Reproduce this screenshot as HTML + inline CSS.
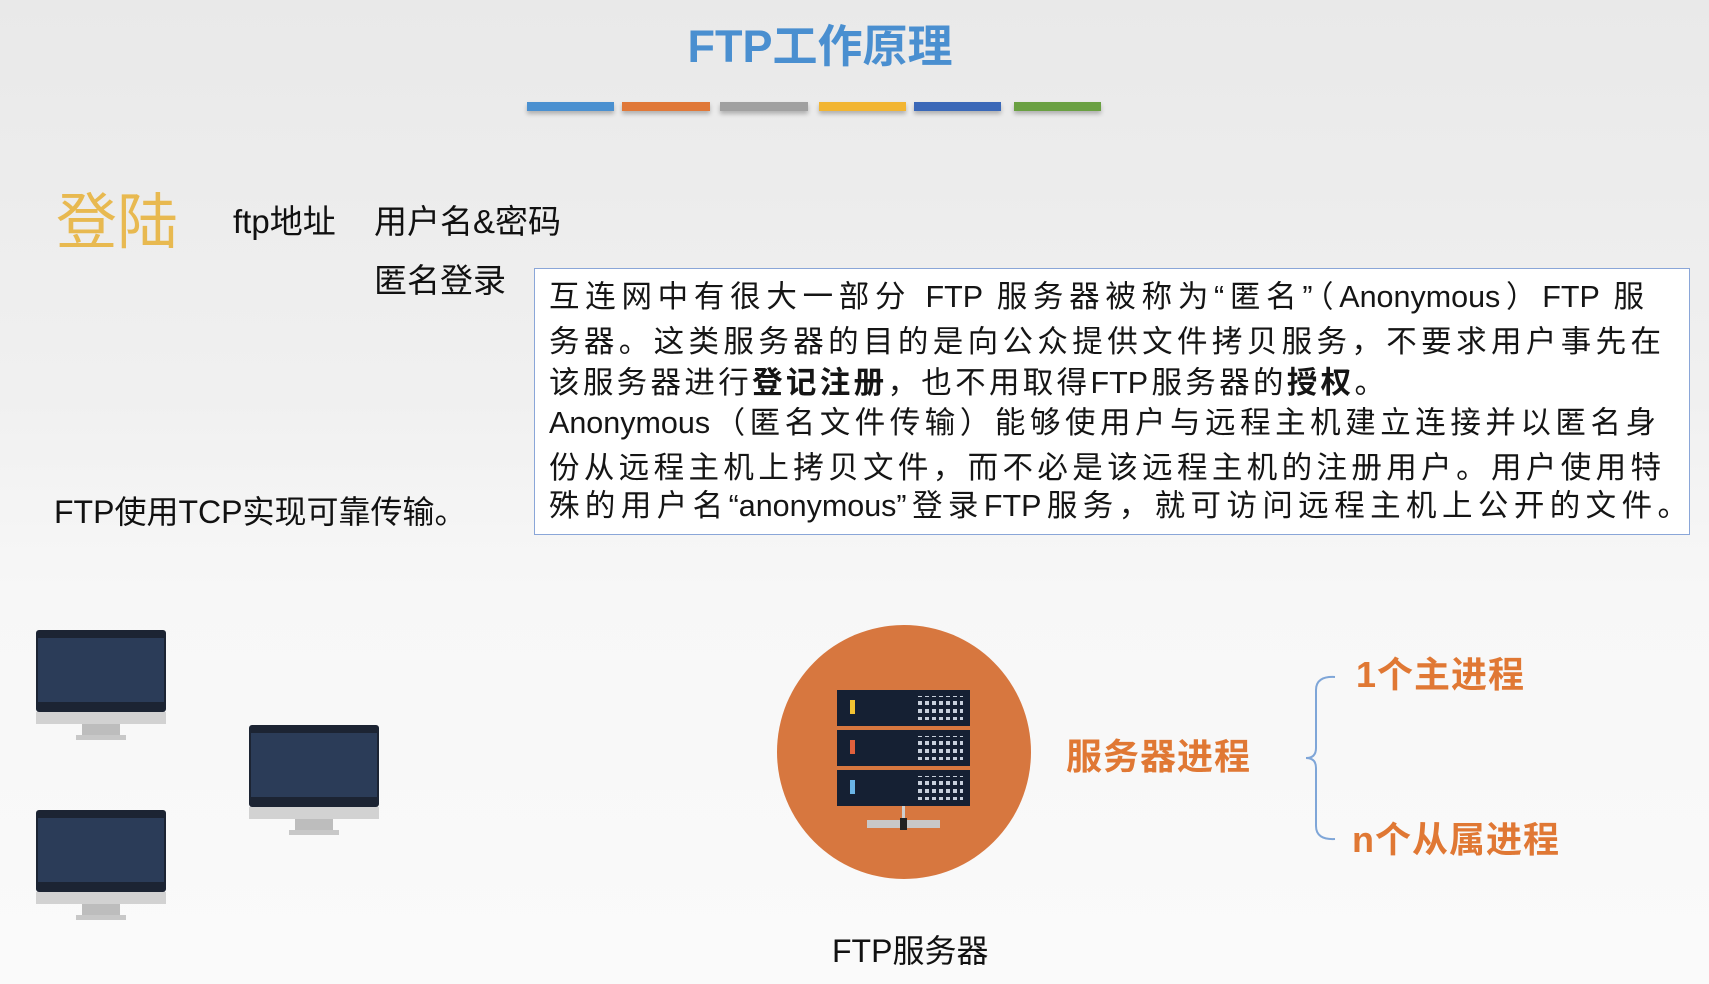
<!DOCTYPE html>
<html><head><meta charset="utf-8"><style>
*{margin:0;padding:0;box-sizing:border-box}
body{width:1709px;height:984px;overflow:hidden;position:relative;background:linear-gradient(#e9e9e9 0%,#f0f0f0 40%,#f7f7f7 60%,#fafafa 100%);font-family:"Liberation Sans","Noto Sans CJK SC",sans-serif;color:#111}
.a{position:absolute;white-space:nowrap;line-height:1}
.bar{position:absolute;top:102px;height:9px;box-shadow:0 3px 4px rgba(0,0,0,.25)}
.box{position:absolute;left:534px;top:268px;width:1156px;height:267px;border:1.5px solid #8aa6d8;background:#fff}
.ln{position:absolute;left:14px;font-size:30.5px;line-height:1;white-space:nowrap;text-align:justify;text-align-last:justify;color:#151515}
.mon{position:absolute;width:130px;height:112px}
.org{color:#e07834;font-weight:bold;letter-spacing:1px}
</style></head><body>
<div class="a" style="left:0;width:1640px;text-align:center;top:24px;font-size:45px;color:#4a8fd0;font-weight:bold">FTP工作原理</div>
<div class="bar" style="left:527px;width:87px;background:#4a90d0"></div>
<div class="bar" style="left:622px;width:88px;background:#e07838"></div>
<div class="bar" style="left:720px;width:88px;background:#a0a0a0"></div>
<div class="bar" style="left:819px;width:87px;background:#f2b532"></div>
<div class="bar" style="left:914px;width:87px;background:#3a68b8"></div>
<div class="bar" style="left:1014px;width:87px;background:#6aa042"></div>

<div class="a" style="left:56px;top:192px;font-size:61px;color:#e8b950">登陆</div>
<div class="a" style="left:233px;top:205px;font-size:33px">ftp地址</div>
<div class="a" style="left:374px;top:205px;font-size:33px">用户名&amp;密码</div>
<div class="a" style="left:374px;top:264px;font-size:33px">匿名登录</div>
<div class="a" style="left:54px;top:496px;font-size:32px">FTP使用TCP实现可靠传输。</div>

<div class="box">
<div class="ln" style="top:13px;width:1095px">互连网中有很大一部分 FTP 服务器被称为“匿名”（Anonymous）FTP 服</div>
<div class="ln" style="top:58px;width:1112px">务器。这类服务器的目的是向公众提供文件拷贝服务，不要求用户事先在</div>
<div class="ln" style="top:99px;width:836px">该服务器进行<b>登记注册</b>，也不用取得FTP服务器的<b>授权</b>。</div>
<div class="ln" style="top:139px;width:1107px">Anonymous（匿名文件传输）能够使用户与远程主机建立连接并以匿名身</div>
<div class="ln" style="top:184px;width:1112px">份从远程主机上拷贝文件，而不必是该远程主机的注册用户。用户使用特</div>
<div class="ln" style="top:222px;width:1139px">殊的用户名“anonymous”登录FTP服务，就可访问远程主机上公开的文件。</div>
</div>

<svg class="mon" style="left:36px;top:630px" viewBox="0 0 130 112"><rect x="0" y="0" width="130" height="82" rx="3" fill="#1c2433"/><rect x="2" y="8" width="126" height="64" fill="#2b3c58"/><rect x="0" y="82" width="130" height="12" fill="#d2d2d2"/><rect x="46" y="94" width="38" height="12" fill="#bdbdbd"/><rect x="40" y="105" width="50" height="5" fill="#c8c8c8"/></svg>
<svg class="mon" style="left:249px;top:725px" viewBox="0 0 130 112"><rect x="0" y="0" width="130" height="82" rx="3" fill="#1c2433"/><rect x="2" y="8" width="126" height="64" fill="#2b3c58"/><rect x="0" y="82" width="130" height="12" fill="#d2d2d2"/><rect x="46" y="94" width="38" height="12" fill="#bdbdbd"/><rect x="40" y="105" width="50" height="5" fill="#c8c8c8"/></svg>
<svg class="mon" style="left:36px;top:810px" viewBox="0 0 130 112"><rect x="0" y="0" width="130" height="82" rx="3" fill="#1c2433"/><rect x="2" y="8" width="126" height="64" fill="#2b3c58"/><rect x="0" y="82" width="130" height="12" fill="#d2d2d2"/><rect x="46" y="94" width="38" height="12" fill="#bdbdbd"/><rect x="40" y="105" width="50" height="5" fill="#c8c8c8"/></svg>

<svg style="position:absolute;left:770px;top:620px" width="270" height="270" viewBox="0 0 270 270">
<defs><pattern id="d" width="7" height="8" patternUnits="userSpaceOnUse"><rect x="1" y="1" width="4" height="4" fill="#c8d0dc"/></pattern></defs>
<circle cx="134" cy="132" r="127" fill="#d7773f"/>
<g fill="#152033">
<rect x="67" y="70" width="133" height="36"/><rect x="67" y="110" width="133" height="36"/><rect x="67" y="150" width="133" height="36"/></g>
<rect x="80" y="80" width="5" height="14" fill="#f2c232"/><rect x="80" y="120" width="5" height="14" fill="#e0603c"/><rect x="80" y="160" width="5" height="14" fill="#6ab4e6"/>
<rect x="148" y="76" width="45" height="24" fill="url(#d)"/><rect x="148" y="116" width="45" height="24" fill="url(#d)"/><rect x="148" y="156" width="45" height="24" fill="url(#d)"/>
<rect x="132" y="186" width="3" height="20" fill="#cfcfcf"/>
<rect x="97" y="200" width="73" height="8" fill="#c8c8c8"/><rect x="130" y="198" width="7" height="12" fill="#222"/>
</svg>

<div class="a org" style="left:1066px;top:739px;font-size:36px">服务器进程</div>
<svg style="position:absolute;left:1280px;top:670px" width="60" height="180"><path d="M55 7 Q36 6 36 20 L36 78 Q36 88 26 88 Q36 88 36 98 L36 156 Q36 170 55 169" fill="none" stroke="#7fa6d8" stroke-width="2"/></svg>
<div class="a org" style="left:1356px;top:657px;font-size:36px">1个主进程</div>
<div class="a org" style="left:1352px;top:822px;font-size:36px">n个从属进程</div>
<div class="a" style="left:832px;top:935px;font-size:32px">FTP服务器</div>
</body></html>
